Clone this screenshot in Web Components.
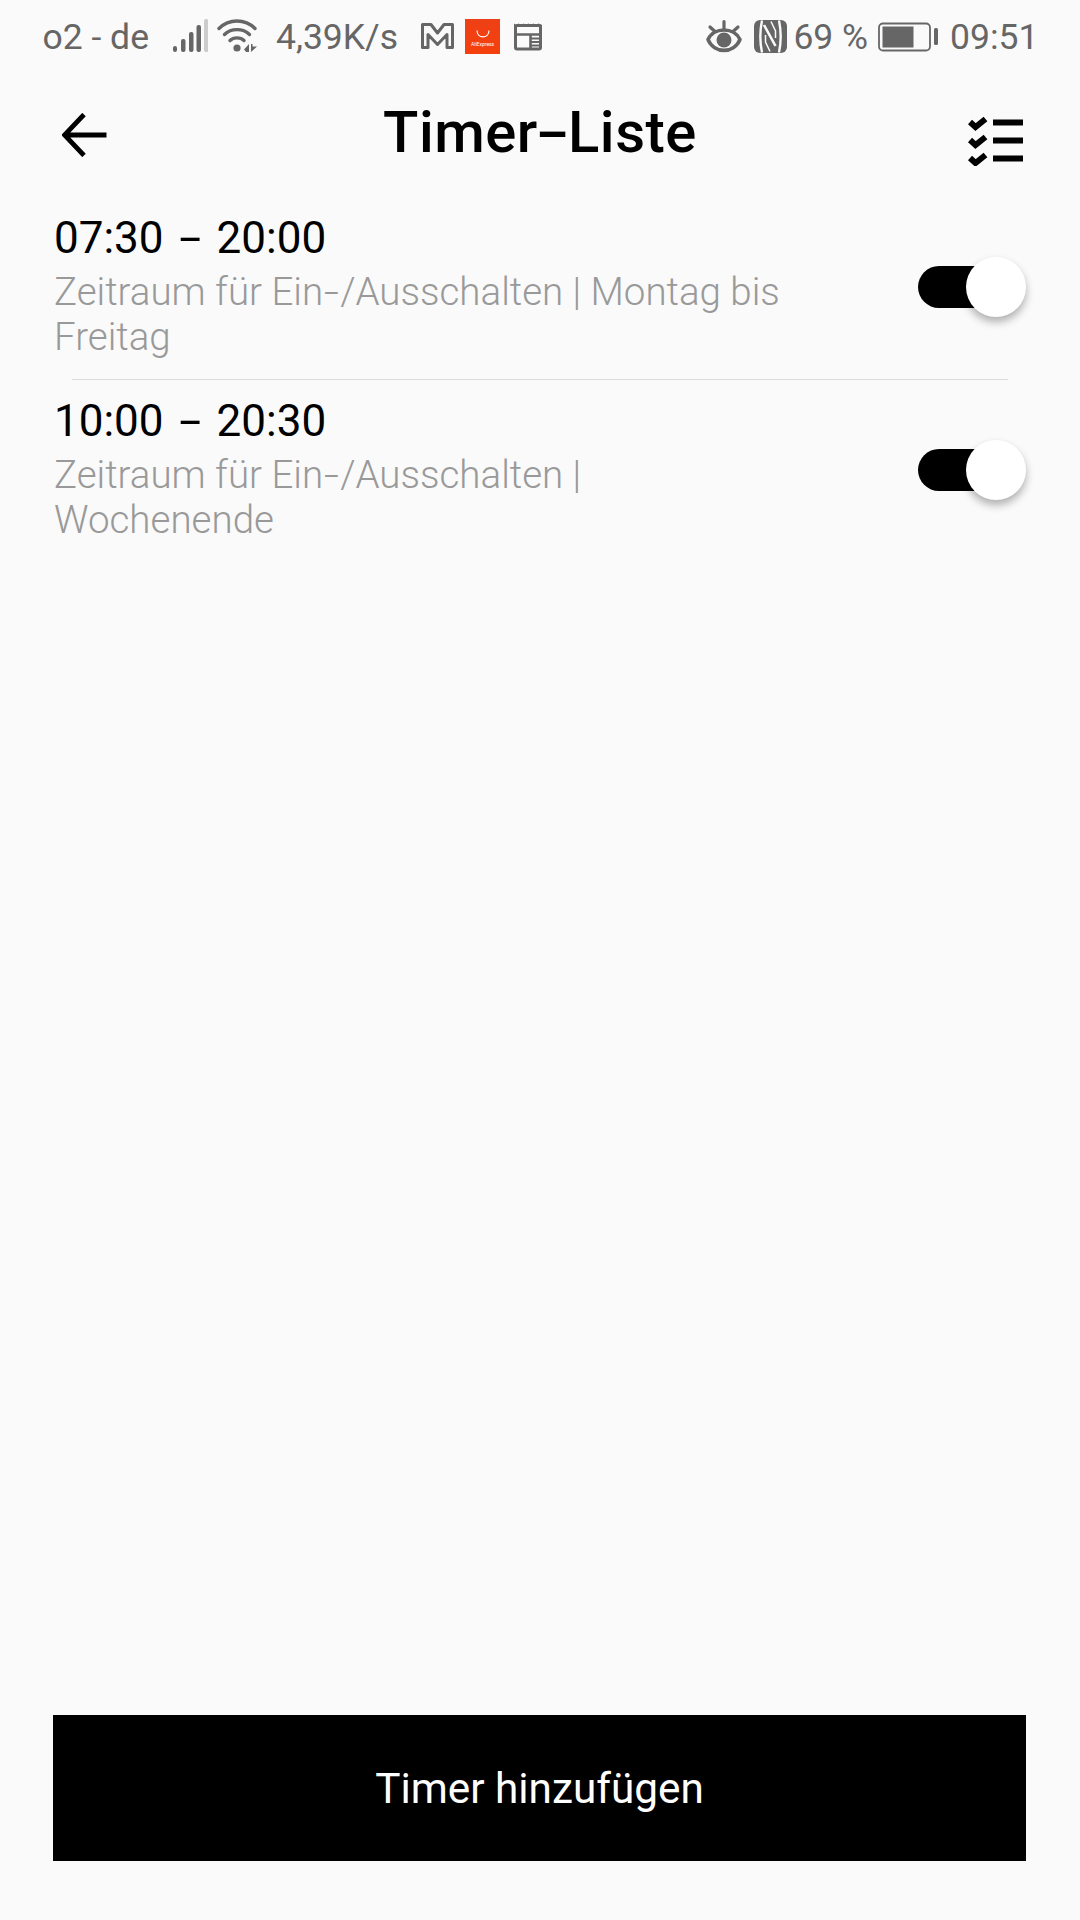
<!DOCTYPE html>
<html lang="de"><head><meta charset="utf-8"><title>Timer-Liste</title>
<style>
html,body{margin:0;padding:0;background:#fafafa}
body{width:1080px;height:1920px;font-family:Roboto,"Liberation Sans",sans-serif}
</style></head><body>
<timer-app>
  <status-bar slot="status"></status-bar>
  <page-header slot="header" title="Timer-Liste"></page-header>
  <timer-row time="07:30 - 20:00" desc="Zeitraum für Ein-/Ausschalten | Montag bis Freitag"></timer-row>
  <list-divider></list-divider>
  <timer-row time="10:00 - 20:30" desc="Zeitraum für Ein-/Ausschalten | Wochenende"></timer-row>
  <action-button slot="action">Timer hinzufügen</action-button>
</timer-app>
<script>
function def(name, html, init){
  customElements.define(name, class extends HTMLElement{
    constructor(){super();this.attachShadow({mode:'open'}).innerHTML=html;}
    connectedCallback(){ if(init) init(this); }
  });
}
function setHy(node,text){
  var i=text.indexOf('-');
  var rest=text.slice(i+1);
  var k=rest.lastIndexOf(' ');
  node.textContent='';
  node.append(text.slice(0,i));
  var s=document.createElement('span');s.className='h';s.textContent='-';
  node.append(s);
  if(node.dataset.wrap){
    var a=document.createElement('span');a.textContent=rest.slice(0,k);
    var b=document.createElement('span');b.textContent=rest.slice(k+1);
    node.append(a,' ',b);
  } else node.append(rest);
}
def('timer-app',`<style>
:host{display:flex;flex-direction:column;width:1080px;height:1920px;background:#fafafa;overflow:hidden}
.list{display:flex;flex-direction:column}
.act{margin-top:auto;display:block}
</style>
<slot name="status"></slot><slot name="header"></slot>
<div class="list"><slot></slot></div>
<div class="act"><slot name="action"></slot></div>`);

def('status-bar',`<style>
:host{display:flex;justify-content:space-between;align-items:center;height:74px;padding:0 41.500px 0 42.500px;color:#666;font-size:35.500px;font-weight:400;box-sizing:border-box}
.g{display:flex;align-items:center;height:40px}
span{white-space:nowrap;line-height:40px}
svg{display:block;height:40px;flex:none}
.ali-box{width:35px;height:35px;background:linear-gradient(#ee4016,#f5400c);display:flex;flex-direction:column;align-items:center;justify-content:flex-end;margin-left:11px;margin-top:-1px;overflow:hidden}
.ali-box b{font:400 5px/6px Roboto,sans-serif;color:#fff;margin-bottom:7px;white-space:nowrap}
.ali-box svg{height:8px;width:14px;margin-bottom:3px}
</style>
<div class="g">
 <span>o2 - de</span>
 <svg style="width:35px;margin-left:24px" viewBox="174 17 35 40"><g fill="#666"><rect x="174" y="46" width="4" height="6" rx="2"/><rect x="182" y="39" width="4.5" height="13" rx="2"/><rect x="190" y="32" width="4.5" height="20" rx="2"/><rect x="197.500" y="25" width="4.500" height="27" rx="2"/></g><rect x="205" y="19" width="4.500" height="33" rx="2" fill="#ccc"/></svg>
 <svg style="width:41px;margin-left:9px" viewBox="218 17 41 40"><g fill="none" stroke="#666" stroke-width="3.400" stroke-linecap="round"><path d="M220 28.500C230 18.500 246 18.500 256 28.500"/><path d="M225.500 34.500C232 28 244 28 250.500 34.500"/><path d="M231 40.500C234.500 37 241.500 37 245 40.500"/></g><circle cx="238" cy="48" r="3.600" fill="#666"/><path d="M250 44V52H247.200L245 49.500ZM252 44V52L258 46.500H253.500V44Z" fill="#666"/></svg>
 <span style="margin-left:18px">4,39K/s</span>
 <svg style="width:33px;margin-left:23px" viewBox="421 17 33 40"><path d="M422.500 24.500H431L437.500 33L444 24.500H452.500V47.500H447V34.500L437.500 44.500L428 34.500V47.500H422.500Z" fill="none" stroke="#666" stroke-width="3" stroke-linejoin="round"/></svg>
 <div class="ali-box"><svg viewBox="0 0 14 8"><path d="M1 0.500C1 9 13 9 13 0.500" fill="none" stroke="#fff" stroke-width="1.200"/></svg><b>AliExpress</b></div>
 <svg style="width:28px;margin-left:14px" viewBox="513 17 28 40"><path d="M513 25V23.500L515 25L517.500 23.500L520 25L522.500 23.500L525 25L527.500 23.500L530 25L532.500 23.500L535 25L537.500 23.500L541 25V27H513Z" fill="#666"/><rect x="514.500" y="25.500" width="25" height="23.500" rx="1.500" fill="none" stroke="#666" stroke-width="3"/><path d="M514 34.500H540M529.500 34.500V49" stroke="#666" stroke-width="2.600" fill="none"/><path d="M530 38.500H538M530 42H538M530 45.500H538" stroke="#666" stroke-width="1.800"/></svg>
</div>
<div class="g">
 <svg style="width:36px" viewBox="706 17 36 40"><path d="M708 39.500C714 26.800 734 26.800 740 39.500C734 54 714 54 708 39.500Z" fill="none" stroke="#666" stroke-width="3.600" stroke-linejoin="round"/><circle cx="724" cy="40" r="7.500" fill="#666"/><path d="M724 21.500V29M710 27L715 31.500M738 27L733 31.500" stroke="#666" stroke-width="3.200" stroke-linecap="round"/></svg>
 <svg style="width:33px;margin-left:12px" viewBox="754 17 33 40"><rect x="754" y="20" width="33" height="33" rx="6" fill="#666"/><path d="M762 20.500C760 30 760 43 762 52.500M779 20.500C781 30 781 43 779 52.500" fill="none" stroke="#fafafa" stroke-width="2.400"/><path d="M764 25L775.500 46" fill="none" stroke="#fafafa" stroke-width="2.600"/><path d="M771 21.500L775.500 31V38M770 51.500L765.500 42V35" fill="none" stroke="#fafafa" stroke-width="1.500"/></svg>
 <span style="margin-left:6.700px">69 %</span>
 <svg style="width:60px;margin-left:10px" viewBox="878 17 60 40"><rect x="879" y="23.500" width="51" height="27" rx="4" fill="none" stroke="#666" stroke-width="1.800"/><rect x="882.500" y="26.500" width="31" height="21" fill="#666"/><rect x="934" y="28" width="4" height="17" rx="1.500" fill="#666"/></svg>
 <span style="margin-left:12px">09:51</span>
</div>`);

def('page-header',`<style>
:host{display:flex;justify-content:space-between;align-items:flex-start;height:123px;padding:0 57px 0 62px;position:relative;box-sizing:border-box}
h1{position:absolute;left:0;right:0;top:26px;margin:0;text-align:center;font:500 58px/64px Roboto,sans-serif;letter-spacing:.5px;color:#000}
.h{display:inline-block;transform:scaleX(1.7);margin:0 5px}
svg{display:block;flex:none}
</style>
<svg style="width:45px;height:44px;margin-top:39px" viewBox="0 0 45 44"><path d="M44.500 22H3M22 1.500L2.500 22L22 42.500" fill="none" stroke="#000" stroke-width="4.800"/></svg>
<h1 id="t"></h1>
<svg style="width:55px;height:50px;margin-top:42px" viewBox="968 116 55 50"><path d="M970 122L975.500 127L985.500 119M970 140L975.500 145L985.500 137M970 158L975.500 163L985.500 155" fill="none" stroke="#000" stroke-width="6"/><path d="M993 122.500H1023M993 140.500H1023M993 158.500H1023" stroke="#000" stroke-width="6"/></svg>`,
 el=>{setHy(el.shadowRoot.getElementById('t'),el.getAttribute('title'));});

def('toggle-switch',`<style>
:host{display:block;position:relative;width:108px;height:60px;flex:none}
.track{position:absolute;left:0;right:10px;top:9px;height:42px;border-radius:21px;background:#000}
.knob{position:absolute;right:0;top:0;width:60px;height:60px;border-radius:50%;background:#fff;box-shadow:0 5px 8px rgba(0,0,0,.3)}
</style><div class="track"></div><div class="knob"></div>`);

def('timer-row',`<style>
:host{display:flex;justify-content:space-between;align-items:center;height:182px;padding:16px 54px 21px 54px;box-sizing:border-box}
.txt{width:745px}
.time{font:400 44px/52px Roboto,sans-serif;color:#000}
.time .h{display:inline-block;transform:scaleX(1.8);margin:0 9.500px}
.desc{font:300 38.500px/45px Roboto,sans-serif;color:#999;margin-top:4.500px}
.desc .h{display:inline-block;transform:scaleX(1.4);margin:0 3px}
toggle-switch{margin-top:2px}
</style>
<div class="txt"><div class="time" id="a"></div><div class="desc" id="b" data-wrap="1"></div></div>
<toggle-switch></toggle-switch>`,
 el=>{setHy(el.shadowRoot.getElementById('a'),el.getAttribute('time'));setHy(el.shadowRoot.getElementById('b'),el.getAttribute('desc'));});

def('list-divider',`<style>:host{display:block;height:1px;margin:0 72px;background:#ddd}</style>`);

def('action-button',`<style>
:host{display:flex;align-items:center;justify-content:center;height:146px;margin:0 54px 59px 53px;padding-top:1.500px;box-sizing:border-box;background:#000;color:#fff;font:400 42.300px/48px Roboto,sans-serif}
</style><slot></slot>`);
</script>
</body></html>
